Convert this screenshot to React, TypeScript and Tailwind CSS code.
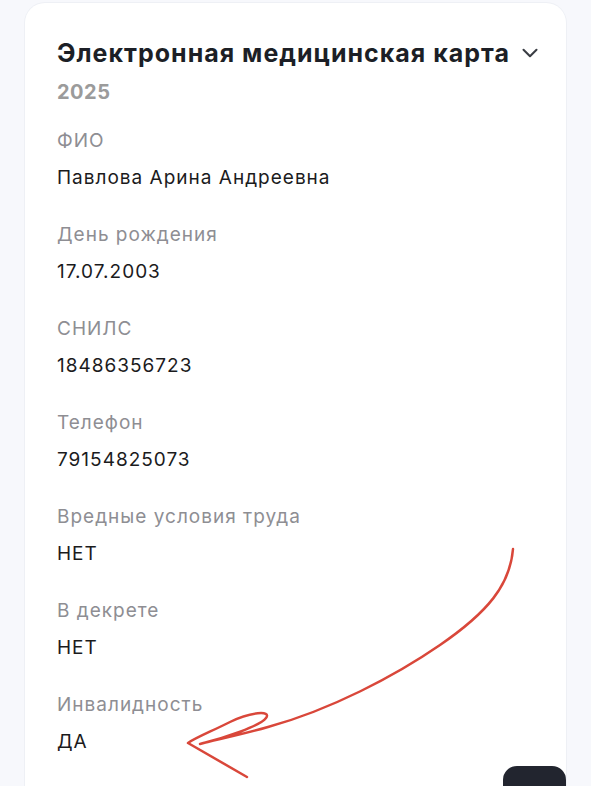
import { ChevronDown } from "lucide-react";

const fields = [
  { label: "ФИО", value: "Павлова Арина Андреевна" },
  { label: "День рождения", value: "17.07.2003" },
  { label: "СНИЛС", value: "18486356723" },
  { label: "Телефон", value: "79154825073" },
  { label: "Вредные условия труда", value: "НЕТ" },
  { label: "В декрете", value: "НЕТ" },
  { label: "Инвалидность", value: "ДА" },
];

const App = () => {
  return (
    <div
      className="relative h-[786px] w-[591px] overflow-hidden bg-[#f7f8fc]"
      style={{ fontFamily: "Inter, 'Noto Sans', sans-serif" }}
    >
      {/* Card */}
      <div className="ml-[25px] mt-[3px] w-[541px] rounded-[20px] bg-white pl-[32px] pr-[23px] pt-[34px] pb-[80px] shadow-[0_0_0_1px_#eef0f5]">
        <div className="flex items-center justify-between">
          <h2 className="text-[25px] leading-[32px] font-bold tracking-[1px] text-[#1c1f26]">
            Электронная медицинская карта
          </h2>
          <ChevronDown className="h-[26px] w-[26px] text-[#3a3d44]" strokeWidth={1.9} />
        </div>
        <p className="mt-[9px] text-[20px] leading-[28px] font-bold tracking-[0.5px] text-[#9b9b9b]">2025</p>

        <div className="mt-[23px] flex flex-col gap-[33px]">
          {fields.map((f) => (
            <div key={f.label} className="flex flex-col gap-[13px]">
              <span className="text-[19px] leading-[24px] tracking-[1px] text-[#8e8e93]">{f.label}</span>
              <span className="text-[19px] leading-[24px] tracking-[1px] text-[#1b1b1d]">{f.value}</span>
            </div>
          ))}
        </div>
      </div>

      {/* Floating button */}
      <div className="absolute left-[503px] top-[766px] h-[50px] w-[63px] rounded-[14px] bg-[#22252f]" />

      {/* Hand-drawn arrow */}
      <svg className="pointer-events-none absolute left-0 top-0" width="591" height="786" viewBox="0 0 591 786">
        <path
          d="M513 549 C510 585 488 612 440 645 C395 676 330 710 268 727 C240 735 215 740 200 744 C225 738 260 726 266 718 C272 710 250 712 230 722 C210 732 195 738 188 743 L247 777"
          fill="none"
          stroke="#d9473a"
          strokeWidth="2.5"
          strokeLinecap="round"
          strokeLinejoin="round"
        />
      </svg>
    </div>
  );
};

export default App;
